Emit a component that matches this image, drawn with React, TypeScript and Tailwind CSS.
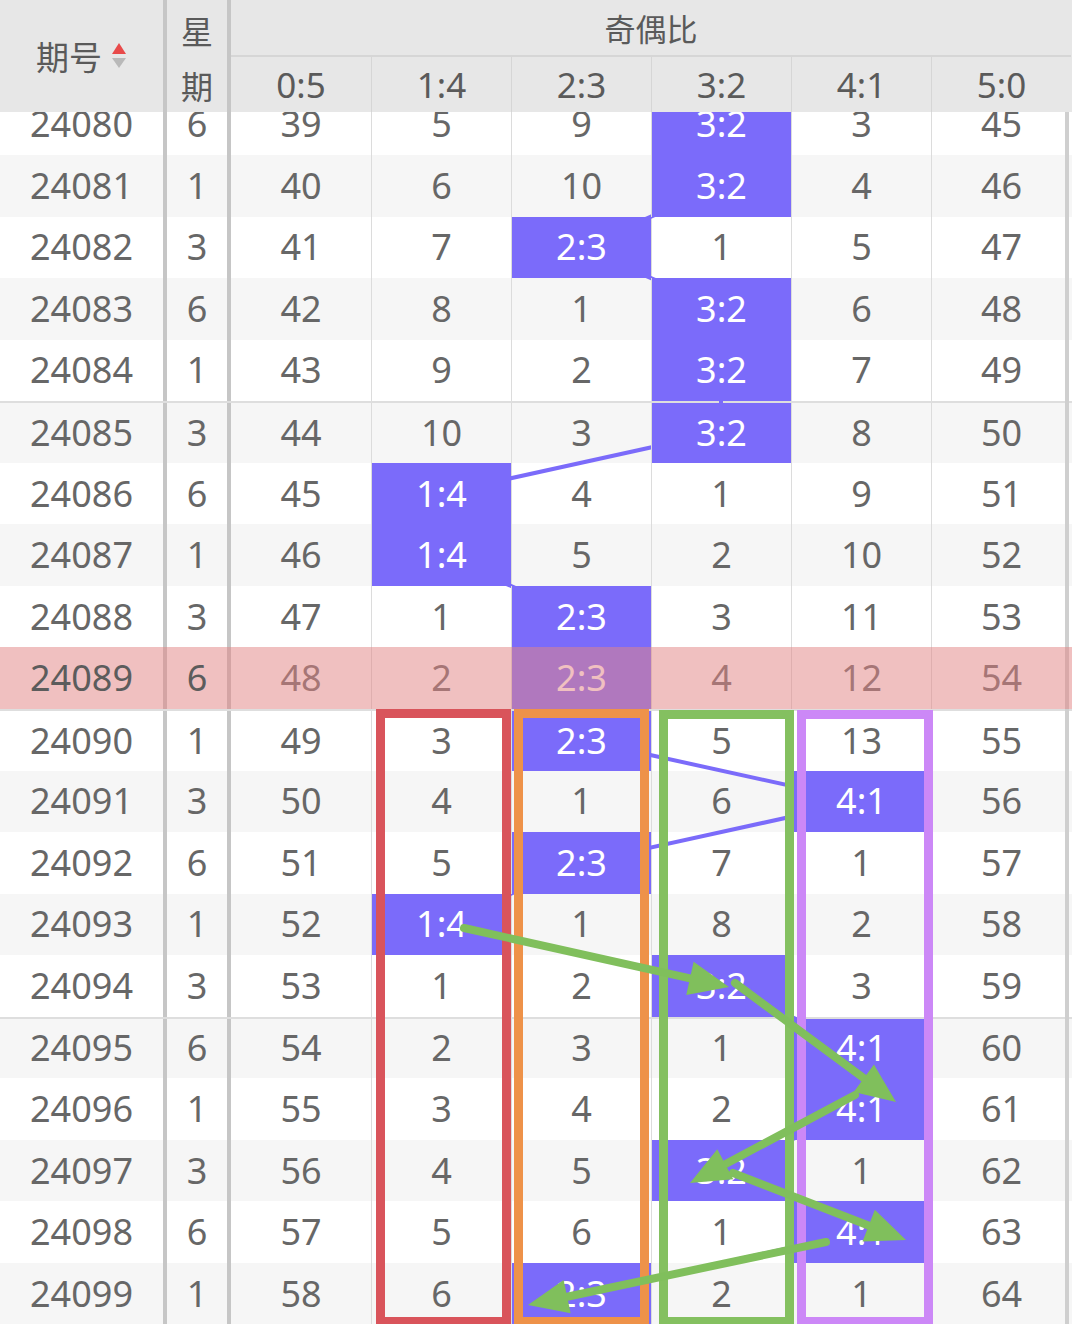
import React from 'react';

const LABELS = ['0:5', '1:4', '2:3', '3:2', '4:1', '5:0'];
const ROW_H = 61.55;
const BODY_TOP = 93.5;
const COL_X0 = 231;
const COL_W = 140;

const DATA: [string, number, number, number[]][] = [
  ['24080', 6, 3, [39, 5, 9, 0, 3, 45]],
  ['24081', 1, 3, [40, 6, 10, 0, 4, 46]],
  ['24082', 3, 2, [41, 7, 0, 1, 5, 47]],
  ['24083', 6, 3, [42, 8, 1, 0, 6, 48]],
  ['24084', 1, 3, [43, 9, 2, 0, 7, 49]],
  ['24085', 3, 3, [44, 10, 3, 0, 8, 50]],
  ['24086', 6, 1, [45, 0, 4, 1, 9, 51]],
  ['24087', 1, 1, [46, 0, 5, 2, 10, 52]],
  ['24088', 3, 2, [47, 1, 0, 3, 11, 53]],
  ['24089', 6, 2, [48, 2, 0, 4, 12, 54]],
  ['24090', 1, 2, [49, 3, 0, 5, 13, 55]],
  ['24091', 3, 4, [50, 4, 1, 6, 0, 56]],
  ['24092', 6, 2, [51, 5, 0, 7, 1, 57]],
  ['24093', 1, 1, [52, 0, 1, 8, 2, 58]],
  ['24094', 3, 3, [53, 1, 2, 0, 3, 59]],
  ['24095', 6, 4, [54, 2, 3, 1, 0, 60]],
  ['24096', 1, 4, [55, 3, 4, 2, 0, 61]],
  ['24097', 3, 3, [56, 4, 5, 0, 1, 62]],
  ['24098', 6, 4, [57, 5, 6, 1, 0, 63]],
  ['24099', 1, 2, [58, 6, 0, 2, 1, 64]],
];

const ARROWS: [number, number, number, number][] = [
  [464, 928, 729, 987],
  [735, 983, 896, 1102],
  [855, 1095, 690, 1183],
  [733, 1173, 906, 1240],
  [826, 1242, 528, 1305],
];

const GRID =
  'grid grid-cols-[163px_4px_60px_4px_140px_140px_140px_140px_140px_140px]';

const cx = (c: number) => COL_X0 + COL_W * c + COL_W / 2;
const cy = (r: number) => BODY_TOP + ROW_H * (r + 0.5);

function SortIcon() {
  return (
    <svg width="16" height="28" viewBox="0 0 16 28" className="block">
      <polygon points="8,1 15,12 1,12" fill="#e84a4a" />
      <polygon points="1,16 15,16 8,26" fill="#b9b9b9" />
    </svg>
  );
}

function Arrow({ x1, y1, x2, y2 }: { x1: number; y1: number; x2: number; y2: number }) {
  const dx = x2 - x1;
  const dy = y2 - y1;
  const len = Math.hypot(dx, dy);
  const ux = dx / len;
  const uy = dy / len;
  const hl = 40;
  const hw = 17;
  const bx = x2 - ux * hl;
  const by = y2 - uy * hl;
  const p1 = `${bx - uy * hw},${by + ux * hw}`;
  const p2 = `${bx + uy * hw},${by - ux * hw}`;
  const lx = x2 - ux * (hl - 6);
  const ly = y2 - uy * (hl - 6);
  return (
    <g>
      <line x1={x1} y1={y1} x2={lx} y2={ly} stroke="#80bf5c" strokeWidth={8} strokeLinecap="round" />
      <polygon points={`${x2},${y2} ${p1} ${p2}`} fill="#80bf5c" />
    </g>
  );
}

export default function App() {
  return (
    <div className="relative w-[1072px] h-[1324px] overflow-hidden bg-white font-['Noto_Sans','Noto_Sans_CJK_SC',sans-serif] text-[#676767]">
      {/* Header */}
      <div className={`${GRID} grid-rows-[57px_55px] h-[112px] bg-[#e7e7e7] relative z-50 text-[#5a5a5a]`}>
        <div className="row-span-2 flex items-center justify-center gap-[9px]">
          <span className="text-[33px] leading-none font-['Noto_Sans_CJK_SC',sans-serif]">期号</span>
          <SortIcon />
        </div>
        <div className="row-span-2 bg-[#c6c6c6]" />
        <div className="row-span-2 flex flex-col items-center justify-center pt-[3px] text-[32px] leading-[55px] font-['Noto_Sans_CJK_SC',sans-serif]">
          <span>星</span>
          <span>期</span>
        </div>
        <div className="row-span-2 bg-[#c6c6c6]" />
        <div className="col-span-6 flex items-center justify-center border-b-2 border-[#d6d6d6] text-[31px] leading-none font-['Noto_Sans_CJK_SC',sans-serif]">
          奇偶比
        </div>
        {LABELS.map((l, i) => (
          <div
            key={l}
            className={
              i > 0
                ? 'flex items-center justify-center border-l-[1.5px] border-[#d6d6d6] text-[35px] leading-none'
                : 'flex items-center justify-center text-[35px] leading-none'
            }
          >
            {l}
          </div>
        ))}
      </div>

      {/* Body */}
      <div className="relative mt-[-18.5px]">
        {DATA.map(([id, wd, hot, vals], r) => {
          const pink = r === 9;
          const bg = pink ? 'bg-white' : r % 2 === 0 ? 'bg-white' : 'bg-[#f6f6f6]';
          const sep = r === 5 || r === 10 || r === 15 ? 'border-t-2 border-[#dedede]' : '';
          return (
            <div key={id} className={`${GRID} relative h-[61.55px] ${bg} ${sep} text-[36px] leading-none`}>
              <div className="flex items-center justify-center">
                <span className={pink ? 'relative z-40 text-[#5c5c5c]' : ''}>{id}</span>
              </div>
              <div className="bg-[#c6c6c6]" />
              <div className="flex items-center justify-center">
                <span className={pink ? 'relative z-40 text-[#5c5c5c]' : ''}>{wd}</span>
              </div>
              <div className="bg-[#c6c6c6]" />
              {vals.map((v, c) => {
                const border = c > 0 ? 'border-l-[1.5px] border-[#dcdcdc]' : '';
                if (c === hot) {
                  return (
                    <div
                      key={c}
                      className={`relative z-20 flex items-center justify-center bg-[#7b6bfa] text-white ${border}`}
                    >
                      {LABELS[c]}
                    </div>
                  );
                }
                return (
                  <div key={c} className={`flex items-center justify-center ${border}`}>
                    {v}
                  </div>
                );
              })}
              {pink && <div className="absolute inset-0 z-30 bg-[rgba(226,133,133,0.515)]" />}
            </div>
          );
        })}
      </div>

      {/* connector lines between hits (under the hit cells) */}
      <svg
        className="absolute left-0 top-0 z-10 pointer-events-none"
        width={1072}
        height={1324}
        viewBox="0 0 1072 1324"
      >
        {DATA.slice(0, -1).map((row, r) => (
          <line
            key={r}
            x1={cx(row[2])}
            y1={cy(r)}
            x2={cx(DATA[r + 1][2])}
            y2={cy(r + 1)}
            stroke="#7b6bfa"
            strokeWidth={4}
          />
        ))}
      </svg>

      {/* right edge line */}
      <div className="absolute left-[1065px] top-0 z-[25] w-[4px] h-[1324px] bg-[#cfcfcf]" />

      {/* annotation boxes */}
      <div className="absolute left-[376px] top-[709px] z-40 w-[135px] h-[617px] border-[9px] border-[#d9545b]" />
      <div className="absolute left-[514px] top-[709px] z-40 w-[135px] h-[617px] border-[9px] border-[#ee9249]" />
      <div className="absolute left-[659px] top-[710px] z-40 w-[135px] h-[616px] border-[9px] border-[#84c060]" />
      <div className="absolute left-[797px] top-[710px] z-40 w-[136px] h-[616px] border-[9px] border-[#cc88f7]" />

      {/* annotation arrows */}
      <svg
        className="absolute left-0 top-0 z-[60] pointer-events-none"
        width={1072}
        height={1324}
        viewBox="0 0 1072 1324"
      >
        {ARROWS.map(([x1, y1, x2, y2], i) => (
          <Arrow key={i} x1={x1} y1={y1} x2={x2} y2={y2} />
        ))}
      </svg>
    </div>
  );
}
